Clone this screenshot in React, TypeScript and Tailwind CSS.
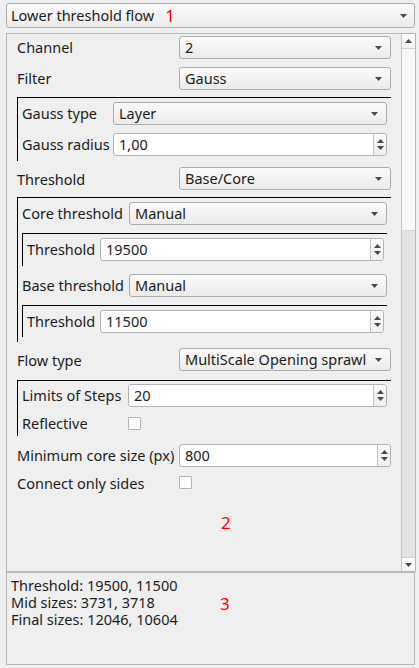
import React from "react";

const Arrow = ({ up = false }: { up?: boolean }) => (
  <svg width="7" height="4" viewBox="0 0 7 4" className="block shrink-0">
    {up ? <polygon points="0,4 7,4 3.5,0" fill="#4a4a4a" /> : <polygon points="0,0 7,0 3.5,4" fill="#4a4a4a" />}
  </svg>
);

const Combo = ({ text, w }: { text: string; w: string }) => (
  <div
    className={`${w} h-[23px] shrink-0 rounded-[3px] border border-[#adadad] bg-linear-to-b from-[#fbfbfb] to-[#ebebeb] flex items-center pl-[5px] pr-[8px]`}
  >
    <span className="flex-1 whitespace-nowrap leading-[17px]">{text}</span>
    <Arrow />
  </div>
);

const Spin = ({ text, w }: { text: string; w: string }) => (
  <div className={`${w} h-[23px] shrink-0 rounded-[3px] border border-[#b3b3b3] bg-white flex items-stretch`}>
    <span className="flex-1 flex items-center pl-[5px] leading-[17px]">{text}</span>
    <div className="w-[13px] border-l border-[#c2c2c2] flex flex-col items-center justify-center gap-[3px] bg-linear-to-b from-[#fafafa] to-[#f0f0f0] rounded-r-[3px]">
      <Arrow up />
      <Arrow />
    </div>
  </div>
);

const Check = () => <div className="w-[13px] h-[13px] shrink-0 border border-[#b5b5b5] bg-white rounded-[1px]" />;

export default function App() {
  return (
    <div className="w-[419px] h-[668px] bg-[#efefef] overflow-hidden text-[14.5px] text-[#1c1c1c] font-['Noto_Sans',sans-serif] relative">
      {/* Top combo */}
      <div className="pt-[3px] pl-[6px]">
        <div className="w-[409px] h-[25px] rounded-[3px] border border-[#adadad] bg-linear-to-b from-[#fbfbfb] to-[#ebebeb] flex items-center pl-[4px] pr-[7px]">
          <span className="leading-[17px]">Lower threshold flow</span>
          <span className="ml-[11px] text-[17px] leading-[17px] text-[#ff0000]">1</span>
          <span className="flex-1" />
          <Arrow />
        </div>
      </div>

      {/* Scroll area */}
      <div className="ml-[6px] mt-[5px] w-[410px] h-[539px] border border-[#b8b8b8] flex overflow-hidden">
        <div className="w-[394px] h-full pl-[10px] pt-[2px] overflow-hidden">
          <div className="flex items-center h-[23px]">
            <span className="w-[162px]">Channel</span>
            <Combo text="2" w="w-[212px]" />
          </div>
          <div className="flex items-center h-[23px] mt-[8px]">
            <span className="w-[162px]">Filter</span>
            <Combo text="Gauss" w="w-[212px]" />
          </div>

          {/* Gauss frame */}
          <div className="mt-[7px] w-[374px] border-t border-l border-black pl-[4px] pt-[4px] pb-[5px]">
            <div className="flex items-center h-[23px]">
              <span className="w-[91px]">Gauss type</span>
              <Combo text="Layer" w="w-[274px]" />
            </div>
            <div className="flex items-center h-[23px] mt-[8px]">
              <span className="w-[91px]">Gauss radius</span>
              <Spin text="1,00" w="w-[274px]" />
            </div>
          </div>

          <div className="flex items-center h-[23px] mt-[6px]">
            <span className="w-[162px] pt-[2px]">Threshold</span>
            <Combo text="Base/Core" w="w-[212px]" />
          </div>

          {/* Threshold frame */}
          <div className="mt-[7px] w-[374px] border-t border-l border-black pl-[4px] pt-[4px] pb-[5px]">
            <div className="flex items-center h-[23px]">
              <span className="w-[107px]">Core threshold</span>
              <Combo text="Manual" w="w-[258px]" />
            </div>
            <div className="mt-[8px] w-[365px] border-t border-l border-black pl-[4px] pt-[4px] pb-[5px]">
              <div className="flex items-center h-[23px]">
                <span className="w-[73px]">Threshold</span>
                <Spin text="19500" w="w-[284px]" />
              </div>
            </div>
            <div className="flex items-center h-[23px] mt-[8px]">
              <span className="w-[107px]">Base threshold</span>
              <Combo text="Manual" w="w-[258px]" />
            </div>
            <div className="mt-[8px] w-[365px] border-t border-l border-black pl-[4px] pt-[4px] pb-[4px]">
              <div className="flex items-center h-[23px]">
                <span className="w-[73px]">Threshold</span>
                <Spin text="11500" w="w-[284px]" />
              </div>
            </div>
          </div>

          <div className="flex items-center h-[23px] mt-[6px]">
            <span className="w-[162px] pt-[2px]">Flow type</span>
            <Combo text="MultiScale Opening sprawl" w="w-[212px]" />
          </div>

          {/* Steps frame */}
          <div className="mt-[9px] w-[374px] border-t border-l border-black pl-[4px] pt-[3px] pb-[6px]">
            <div className="flex items-center h-[23px]">
              <span className="w-[106px]">Limits of Steps</span>
              <Spin text="20" w="w-[259px]" />
            </div>
            <div className="flex items-center h-[14px] mt-[9px]">
              <span className="w-[106px] leading-[17px]">Reflective</span>
              <Check />
            </div>
          </div>

          <div className="flex items-center h-[23px] mt-[8px]">
            <span className="w-[162px]">Minimum core size (px)</span>
            <Spin text="800" w="w-[212px]" />
          </div>
          <div className="flex items-center h-[14px] mt-[8px]">
            <span className="w-[162px] leading-[17px] pt-[3px]">Connect only sides</span>
            <Check />
          </div>

          <div className="mt-[25px] pl-[204px] text-[17px] leading-[17px] text-[#ff0000]">2</div>
        </div>

        {/* Scrollbar */}
        <div className="w-[14px] h-full border-l border-[#c6c6c6] flex flex-col">
          <div className="h-[15px] shrink-0 bg-linear-to-b from-[#fdfdfd] to-[#f3f3f3] border-b border-[#d0d0d0] flex items-center justify-center">
            <Arrow up />
          </div>
          <div className="h-[182px] shrink-0 bg-[#f8f8f8] border-b border-[#d8d8d8]" />
          <div className="flex-1 bg-[#e3e3e3]" />
          <div className="h-[14px] shrink-0 bg-linear-to-b from-[#fdfdfd] to-[#f3f3f3] border-t border-[#d0d0d0] flex items-center justify-center">
            <Arrow />
          </div>
        </div>
      </div>

      {/* Bottom panel */}
      <div className="ml-[6px] w-[409px] h-[93px] border border-[#b8b8b8] relative pl-[4px] pt-[4px] leading-[17px]">
        <div>Threshold: 19500, 11500</div>
        <div>Mid sizes: 3731, 3718</div>
        <div>Final sizes: 12046, 10604</div>
        <span className="absolute left-[213px] top-[22px] text-[17px] leading-[17px] text-[#ff0000]">3</span>
      </div>
    </div>
  );
}
